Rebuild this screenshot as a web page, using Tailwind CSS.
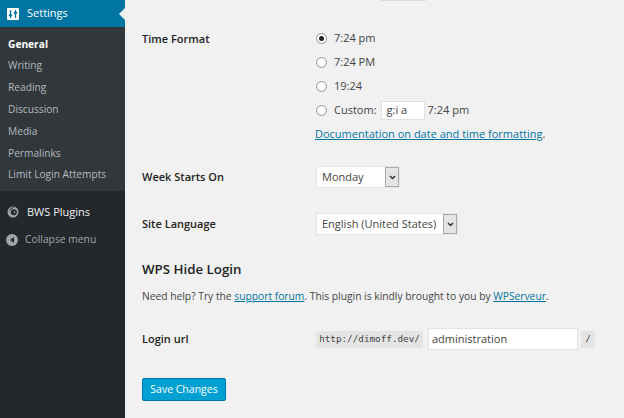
<!DOCTYPE html>
<html lang="en">
<head>
  <title>General Settings</title>
  <meta charset="UTF-8">
  <script src="https://cdn.jsdelivr.net/npm/@tailwindcss/browser@4"></script>
</head>
<body class="w-[624px] h-[418px] overflow-hidden bg-[#f1f1f1] font-['Open_Sans',sans-serif] text-[11px] text-[#444]">
  <div class="flex h-[418px]">
    <!-- sidebar -->
    <aside class="w-[125px] shrink-0 bg-[#23282d] flex flex-col">
      <div class="relative h-[27px] bg-[#0074a2] flex items-center pl-[7px] gap-[8px] text-white text-[11px]">
        <svg class="w-[12px] h-[12px]" viewBox="0 0 12 12">
          <rect width="12" height="12" rx="1" fill="#fff"/>
          <path d="M3.5 2v6M2 6.5l1.5 2 1.5-2M3 9.5h1M8.5 10V4M7 5.5l1.5-2 1.5 2M8 2.5h1" stroke="#0074a2" stroke-width="1.3" fill="none"/>
        </svg>
        <span>Settings</span>
        <span class="absolute right-0 top-[8px] w-0 h-0 border-y-[6px] border-y-transparent border-r-[6px] border-r-[#f1f1f1]"></span>
      </div>
      <nav class="bg-[#32373c] h-[164px] pt-[6.4px] flex flex-col text-[#b4b9be] text-[10.2px]">
        <a class="h-[21.8px] pl-[8px] flex items-center font-bold text-white">General</a>
        <a class="h-[21.8px] pl-[8px] flex items-center">Writing</a>
        <a class="h-[21.8px] pl-[8px] flex items-center">Reading</a>
        <a class="h-[21.8px] pl-[8px] flex items-center">Discussion</a>
        <a class="h-[21.8px] pl-[8px] flex items-center">Media</a>
        <a class="h-[21.8px] pl-[8px] flex items-center">Permalinks</a>
        <a class="h-[21.8px] pl-[8px] flex items-center">Limit Login Attempts</a>
      </nav>
      <div class="h-[32px] mt-[5px] flex items-center pl-[7px] gap-[8px] text-[#eee] text-[11px]">
        <svg class="w-[12px] h-[12px]" viewBox="0 0 12 12">
          <circle cx="6" cy="6" r="5.5" fill="#9ea3a8"/>
          <path d="M2.5 4.5a5 5 0 0 1 4-3" stroke="#23282d" stroke-width="1" fill="none"/>
          <circle cx="6.8" cy="6.2" r="3" fill="#23282d"/>
          <circle cx="7.5" cy="6" r="1.3" fill="#5d6369"/>
        </svg>
        <span>BWS Plugins</span>
      </div>
      <div class="h-[22px] mt-[1px] flex items-center pl-[6px] gap-[7px] text-[#a0a5aa] text-[10.3px]">
        <span class="w-[12px] h-[12px] rounded-full bg-[#a0a5aa] flex items-center justify-center">
          <span class="w-0 h-0 border-y-[3px] border-y-transparent border-r-[4px] border-r-[#23282d]"></span>
        </span>
        <span>Collapse menu</span>
      </div>
    </aside>

    <!-- settings form -->
    <main class="flex-1 pl-[17px] flex flex-col relative">
      <div class="absolute left-[255px] top-0 w-[46px] h-[1px] bg-[#ddd]"></div>

      <div class="flex mt-[29px]">
        <div class="w-[174px] font-semibold text-[#222] leading-[20px]">Time Format</div>
        <div class="flex flex-col">
          <label class="h-[16px] mt-[1px] flex items-center gap-[7px]">
            <span class="w-[11px] h-[11px] rounded-full border border-[#8f8f8f] bg-white flex items-center justify-center"><span class="w-[5px] h-[5px] rounded-full bg-[#222]"></span></span>
            <span>7:24 pm</span>
          </label>
          <label class="h-[16px] mt-[8px] flex items-center gap-[7px]">
            <span class="w-[11px] h-[11px] rounded-full border border-[#8f8f8f] bg-white"></span>
            <span>7:24 PM</span>
          </label>
          <label class="h-[16px] mt-[8px] flex items-center gap-[7px]">
            <span class="w-[11px] h-[11px] rounded-full border border-[#8f8f8f] bg-white"></span>
            <span>19:24</span>
          </label>
          <label class="h-[20px] mt-[6px] flex items-center">
            <span class="w-[11px] h-[11px] rounded-full border border-[#8f8f8f] bg-white mr-[7px]"></span>
            <span>Custom:</span>
            <span class="w-[44px] h-[19px] ml-[4px] mr-[3px] pl-[5px] bg-white border border-[#e2e2e2] flex items-center">g:i a</span>
            <span>7:24 pm</span>
          </label>
          <p class="-ml-[1px] mt-[6px] leading-[16px]"><a class="text-[#0074a2] underline">Documentation on date and time formatting</a>.</p>
        </div>
      </div>

      <div class="flex items-center mt-[24px] h-[22px]">
        <div class="w-[174px] font-semibold text-[#222]">Week Starts On</div>
        <div class="w-[84px] h-[22px] bg-white border border-[#e6e6e6] flex justify-between items-stretch pl-[5px]">
          <span class="self-center">Monday</span>
          <span class="w-[14px] bg-[#e4e4e4] border border-[#a9a9a9] flex items-center justify-center">
            <svg class="w-[7px] h-[5px]" viewBox="0 0 7 5"><path d="M1 1l2.5 2.5L6 1" stroke="#333" stroke-width="1.5" fill="none"/></svg>
          </span>
        </div>
      </div>

      <div class="flex items-center mt-[25px] h-[22px]">
        <div class="w-[174px] font-semibold text-[#222]">Site Language</div>
        <div class="w-[142px] h-[22px] bg-white border border-[#e6e6e6] flex justify-between items-stretch pl-[5px]">
          <span class="self-center">English (United States)</span>
          <span class="w-[14px] bg-[#e4e4e4] border border-[#a9a9a9] flex items-center justify-center">
            <svg class="w-[7px] h-[5px]" viewBox="0 0 7 5"><path d="M1 1l2.5 2.5L6 1" stroke="#333" stroke-width="1.5" fill="none"/></svg>
          </span>
        </div>
      </div>

      <h2 class="mt-[24px] text-[13.3px] leading-[20px] font-semibold text-[#222]">WPS Hide Login</h2>
      <p class="mt-[9px] text-[10.27px] leading-[16px]">Need help? Try the <a class="text-[#0074a2] underline">support forum</a>. This plugin is kindly brought to you by <a class="text-[#0074a2] underline">WPServeur</a>.</p>

      <div class="flex items-center mt-[24px] h-[22px]">
        <div class="w-[174px] font-semibold text-[#222]">Login url</div>
        <code class="w-[107px] h-[17px] bg-[#e4e4e4] font-['DejaVu_Sans_Mono',monospace] text-[9.3px] flex items-center justify-center">http://dimoff.dev/</code>
        <span class="w-[150px] h-[22px] ml-[5px] pl-[3px] bg-white border border-[#e2e2e2] text-[11px] flex items-center">administration</span>
        <code class="h-[17px] w-[14px] ml-[3px] bg-[#e4e4e4] font-['DejaVu_Sans_Mono',monospace] text-[9.3px] flex items-center justify-center">/</code>
      </div>

      <button class="mt-[28px] w-[84px] h-[23px] bg-[#00a0d2] border border-[#0073aa] rounded-[2px] text-white text-[10.5px]">Save Changes</button>
    </main>
  </div>
</body>
</html>
